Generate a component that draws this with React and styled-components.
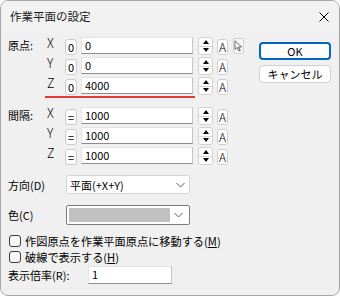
import React from 'react';
import styled, { createGlobalStyle } from 'styled-components';

const Global = createGlobalStyle`
  html, body { margin: 0; padding: 0; background: #ffffff; }
  body { font-family: "Noto Sans CJK JP", "Noto Sans", sans-serif; }
  * { box-sizing: border-box; }
`;

const Window = styled.div`
  width: 340px;
  height: 296px;
  border: 1px solid #a8a8a8;
  border-radius: 8px;
  background: #f0f0f0;
  overflow: hidden;
  display: flex;
  flex-direction: column;
  font-size: 11px;
  color: #000;
`;

const TitleBar = styled.div`
  height: 31px;
  flex: none;
  display: flex;
  align-items: center;
  justify-content: space-between;
  padding: 0 10px 0 9px;
  background: #f2f2f2;
`;

const Title = styled.span`
  font-size: 11.5px;
  line-height: 14px;
  margin-top: -1px;
  color: #1a1a1a;
`;

const Body = styled.div`
  flex: 1;
  display: flex;
  padding: 5px 8px 0 7px;
`;

const LeftCol = styled.div`
  display: flex;
  flex-direction: column;
  width: 245px;
`;

const RightCol = styled.div`
  margin-left: auto;
  margin-top: 5px;
  display: flex;
  flex-direction: column;
  gap: 5px;
`;

const DialogButton = styled.button`
  width: 72px;
  height: 18px;
  padding: 0;
  font-family: inherit;
  font-size: 11px;
  font-weight: 400;
  line-height: 14px;
  color: #000;
  background: #fdfdfd;
  border-radius: 4px;
  border: ${p => (p.$primary ? '2px solid #0067c0' : '1px solid #d0d0d0')};
`;

const Section = styled.div`
  display: flex;
  margin-top: ${p => p.$top || 0}px;
`;

const SectionLabel = styled.div`
  width: 38px;
  line-height: 14px;
  padding-top: ${p => p.$pt || 0}px;
`;

const Rows = styled.div`
  display: flex;
  flex-direction: column;
  gap: 3px;
`;

const Row = styled.div`
  display: flex;
  align-items: flex-start;
  height: 17px;
`;

const AxisLabel = styled.div`
  width: 19px;
  font-size: 12.5px;
  line-height: 12px;
  font-weight: 300;
  padding-left: 1px;
`;

const SmallBtn = styled.div`
  width: 12px;
  height: 16px;
  margin-top: 2px;
  margin-right: 4px;
  border: 1px solid #cdcdcd;
  border-radius: 3px;
  background: #fdfdfd;
  font-size: 11px;
  line-height: 14px;
  text-align: center;
`;

const Input = styled.div`
  width: ${p => p.$w || 112}px;
  height: ${p => p.$h || 17}px;
  background: #fff;
  border: 1px solid #e4e4e4;
  border-right-color: #c4c4c4;
  border-bottom-color: #8c8c8c;
  padding-left: 3px;
  font-size: 11px;
  line-height: 15px;
`;

const Spinner = styled.div`
  width: 15px;
  height: 18px;
  margin-left: 5px;
  border: 1px solid #d2d2d2;
  border-radius: 3px;
  background: #fdfdfd;
  display: flex;
  flex-direction: column;
`;

const SpinHalf = styled.div`
  flex: 1;
  display: flex;
  align-items: center;
  justify-content: center;
  border-top: ${p => (p.$bottom ? '1px solid #d8d8d8' : 'none')};
`;

const Tri = styled.div`
  width: 0;
  height: 0;
  border-left: 3.5px solid transparent;
  border-right: 3.5px solid transparent;
  ${p =>
    p.$down
      ? 'border-top: 4px solid #000;'
      : 'border-bottom: 4px solid #000;'}
`;

const ABtn = styled.div`
  width: 11px;
  height: 16px;
  margin-left: 4px;
  margin-top: 2px;
  border: 1px solid #cfcfcf;
  border-radius: 3px;
  background: #fdfdfd;
  font-size: 12px;
  line-height: 14px;
  text-align: center;
  font-weight: 300;
`;

const CursorBtn = styled.div`
  width: 11px;
  height: 16px;
  margin-left: 5px;
  margin-top: 1px;
  border: 1px solid #cfcfcf;
  border-radius: 2px;
  background: #f7f7f7;
  display: flex;
  align-items: center;
  justify-content: center;
`;

const RedLine = styled.div`
  width: 150px;
  height: 2px;
  margin: 2px 0 0 37px;
  background: #e23b3b;
`;

const FieldRow = styled.div`
  display: flex;
  align-items: center;
  margin-top: ${p => p.$top || 0}px;
`;

const FieldLabel = styled.div`
  width: ${p => p.$w || 58}px;
  line-height: 14px;
`;

const Select = styled.div`
  width: 124px;
  height: ${p => p.$h || 19}px;
  background: #fff;
  border: 1px solid ${p => (p.$dark ? '#7e7e7e' : '#d5d5d5')};
  border-radius: 2px;
  display: flex;
  align-items: center;
  padding: ${p => (p.$swatch ? '2px' : '0 0 0 3px')};
  font-size: 11px;
`;

const SelectText = styled.span`
  flex: 1;
  line-height: 14px;
`;

const Swatch = styled.div`
  width: 101px;
  align-self: stretch;
  background: #c0c0c0;
`;

const Chevron = styled.svg`
  margin-left: auto;
  margin-right: 4px;
  flex: none;
`;

const CheckRow = styled.label`
  display: flex;
  align-items: center;
  height: 16px;
  margin-top: ${p => p.$top || 0}px;
`;

const Box = styled.span`
  width: 12px;
  height: 12px;
  margin-left: 1px;
  border: 1px solid #3c3c3c;
  border-radius: 3px;
  background: #f7f7f7;
  flex: none;
`;

const CheckText = styled.span`
  margin-left: 4px;
  line-height: 14px;
  font-size: 11.2px;
`;

const Key = styled.span`
  text-decoration: underline;
`;

const ChevronIcon = () => (
  <Chevron width="9" height="6" viewBox="0 0 9 6">
    <path d="M0.5 1 L4.5 5 L8.5 1" fill="none" stroke="#606060" strokeWidth="1" />
  </Chevron>
);

const CursorIcon = () => (
  <svg width="9" height="12" viewBox="0 0 9 12">
    <path
      d="M1 0.8 L1 9.5 L3.2 7.4 L4.9 11 L6.3 10.3 L4.6 6.9 L7.6 6.9 Z"
      fill="#fff"
      stroke="#555"
      strokeWidth="0.9"
      strokeLinejoin="round"
    />
  </svg>
);

const SpinBox = () => (
  <Spinner>
    <SpinHalf>
      <Tri />
    </SpinHalf>
    <SpinHalf $bottom>
      <Tri $down />
    </SpinHalf>
  </Spinner>
);

const ValueRow = ({ axis, btn, value, cursor }) => (
  <Row>
    <AxisLabel>{axis}</AxisLabel>
    <SmallBtn>{btn}</SmallBtn>
    <Input>{value}</Input>
    <SpinBox />
    <ABtn>A</ABtn>
    {cursor && (
      <CursorBtn>
        <CursorIcon />
      </CursorBtn>
    )}
  </Row>
);

export default function App() {
  return (
    <>
      <Global />
      <Window>
        <TitleBar>
          <Title>作業平面の設定</Title>
          <svg width="10" height="10" viewBox="0 0 10 10">
            <path d="M0.5 0.5 L9.5 9.5 M9.5 0.5 L0.5 9.5" stroke="#000" strokeWidth="1" />
          </svg>
        </TitleBar>
        <Body>
          <LeftCol>
            <Section>
              <SectionLabel $pt={1}>原点:</SectionLabel>
              <Rows>
                <ValueRow axis="X" btn="0" value="0" cursor />
                <ValueRow axis="Y" btn="0" value="0" />
                <ValueRow axis="Z" btn="0" value="4000" />
              </Rows>
            </Section>
            <RedLine />
            <Section $top={9}>
              <SectionLabel $pt={1}>間隔:</SectionLabel>
              <Rows>
                <ValueRow axis="X" btn="=" value="1000" />
                <ValueRow axis="Y" btn="=" value="1000" />
                <ValueRow axis="Z" btn="=" value="1000" />
              </Rows>
            </Section>
            <FieldRow $top={11}>
              <FieldLabel>方向(D)</FieldLabel>
              <Select>
                <SelectText>平面(+X+Y)</SelectText>
                <ChevronIcon />
              </Select>
            </FieldRow>
            <FieldRow $top={11}>
              <FieldLabel>色(C)</FieldLabel>
              <Select $h={20} $dark $swatch>
                <Swatch />
                <ChevronIcon />
              </Select>
            </FieldRow>
            <CheckRow $top={8}>
              <Box />
              <CheckText>
                作図原点を作業平面原点に移動する(<Key>M</Key>)
              </CheckText>
            </CheckRow>
            <CheckRow>
              <Box />
              <CheckText>
                破線で表示する(<Key>H</Key>)
              </CheckText>
            </CheckRow>
            <FieldRow $top={1}>
              <FieldLabel $w={80}>表示倍率(R):</FieldLabel>
              <Input $w={84} $h={18}>1</Input>
            </FieldRow>
          </LeftCol>
          <RightCol>
            <DialogButton $primary>OK</DialogButton>
            <DialogButton>キャンセル</DialogButton>
          </RightCol>
        </Body>
      </Window>
    </>
  );
}
